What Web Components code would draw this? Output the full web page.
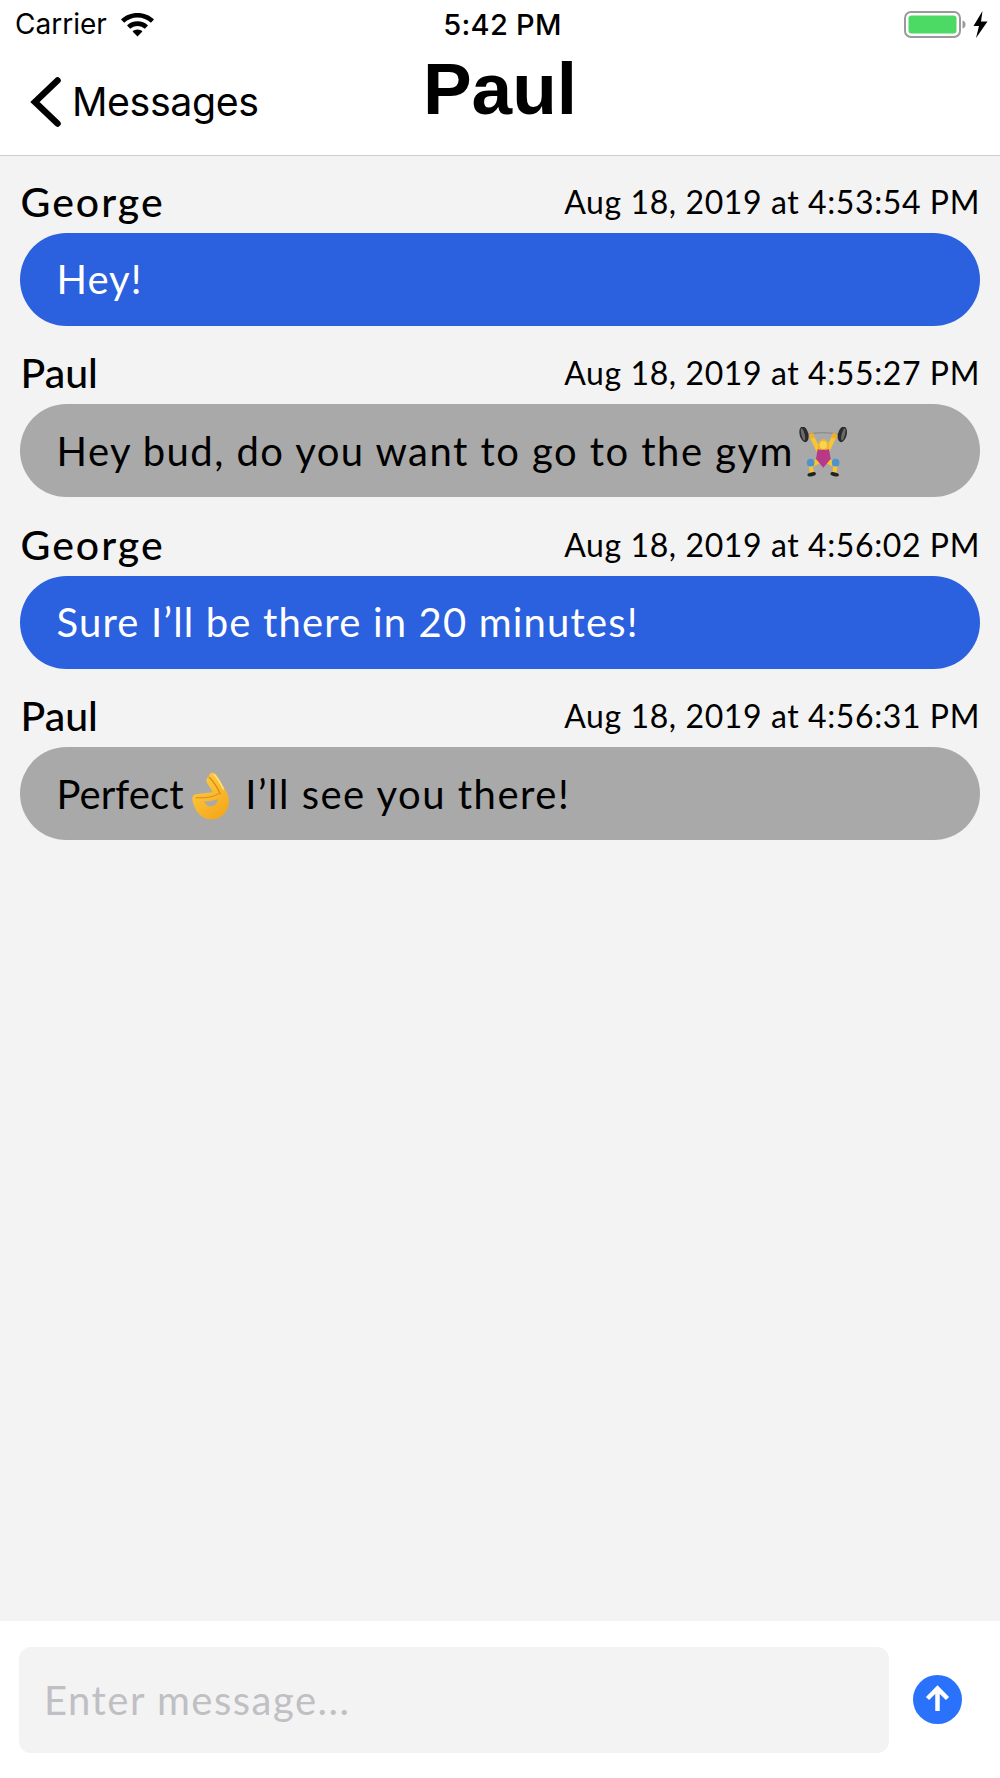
<!DOCTYPE html>
<html lang="en">
<head>
<meta charset="utf-8">
<title>Paul</title>
<style>
  html, body { margin: 0; padding: 0; background: #fff; }
  .george { --name-track: 2px; }
  .paul { --name-track: 0px; }
</style>
</head>
<body>
<chat-screen>
  <status-bar slot="status" carrier="Carrier" time="5:42 PM"></status-bar>
  <nav-bar slot="nav" back="Messages" title="Paul"></nav-bar>
  <chat-message class="george" sender="George" time="Aug 18, 2019 at 4:53:54 PM" kind="mine">Hey!</chat-message>
  <chat-message class="paul" style="--body-track:1.46px" sender="Paul" time="Aug 18, 2019 at 4:55:27 PM" kind="theirs">Hey bud, do you want to go to the gym<chat-emoji name="lifter"></chat-emoji></chat-message>
  <chat-message class="george" style="--body-track:1.17px" sender="George" time="Aug 18, 2019 at 4:56:02 PM" kind="mine">Sure I’ll be there in 20 minutes!</chat-message>
  <chat-message class="paul" style="--body-track:1.5px" sender="Paul" time="Aug 18, 2019 at 4:56:31 PM" kind="theirs"><span style="letter-spacing:.07px">Perfect</span><chat-emoji name="ok"></chat-emoji> I’ll see you there!</chat-message>
  <message-input slot="footer" placeholder="Enter message..."></message-input>
</chat-screen>

<script>
class ChatScreen extends HTMLElement {
  constructor() {
    super()
    const shadow = this.attachShadow({mode: 'open'})
    shadow.innerHTML = `
      <style>
        :host {
          display: flex;
          flex-direction: column;
          width: 1000px;
          height: 1778px;
          background: #fff;
          overflow: hidden;
        }
        .list {
          flex: 1;
          display: flex;
          flex-direction: column;
          gap: 2px;
          padding: 0 20px 0 19.5px;
          background: #f3f3f3;
        }
      </style>
      <slot name="status"></slot>
      <slot name="nav"></slot>
      <div class="list"><slot></slot></div>
      <slot name="footer"></slot>
    `
  }
}

class StatusBar extends HTMLElement {
  constructor() {
    super()
    const shadow = this.attachShadow({mode: 'open'})
    shadow.innerHTML = `
      <style>
        :host {
          display: grid;
          grid-template-columns: 1fr auto 1fr;
          align-items: center;
          height: 48px;
          padding: 0 12px 0 15px;
          font-family: Inter, "Liberation Sans", sans-serif;
          color: #000;
        }
        .left { display: flex; align-items: center; gap: 13px; font-size: 28px; }
        .time { font-size: 29px; font-weight: 500; letter-spacing: .3px; margin-left: 2px; }
        .right { display: flex; align-items: center; justify-content: flex-end; }
        svg { display: block; }
      </style>
      <div class="left">
        <span>${this.getAttribute('carrier')}</span>
        <svg width="35" height="25" viewBox="0 0 35 25">
          <path d="M17.5 1C11 1 5.3 3.4 1 7.4l3.2 3.4c3.5-3.2 8.2-5.2 13.3-5.2s9.8 2 13.3 5.2L34 7.4C29.700 3.400 24 1 17.500 1z"/>
          <path d="M17.500 9.300c-4 0-7.700 1.500-10.500 4.100l3.200 3.400c1.900-1.800 4.500-2.900 7.300-2.900s5.400 1.100 7.300 2.900l3.200-3.400c-2.800-2.600-6.500-4.100-10.500-4.100z"/>
          <path d="M17.500 17.500c-1.900 0-3.600.7-4.900 1.900l4.900 5.100 4.900-5.100c-1.300-1.200-3-1.900-4.900-1.900z"/>
        </svg>
      </div>
      <span class="time">${this.getAttribute('time')}</span>
      <div class="right">
        <svg width="84" height="28" viewBox="0 0 84 28">
          <rect x="1" y="2" width="55" height="25" rx="6" fill="none" stroke="#9a9a9a" stroke-width="2"/>
          <rect x="4.500" y="5.500" width="48" height="18" rx="3" fill="#4cd964"/>
          <path d="M58.500 10.500c2 .5 3 2 3 4s-1 3.500-3 4z" fill="#9a9a9a"/>
          <path d="M79 1 70 16h5.500L72.500 28 84 11.500h-6.500z" transform="translate(-.5 0)"/>
        </svg>
      </div>
    `
  }
}

class NavBar extends HTMLElement {
  constructor() {
    super()
    const shadow = this.attachShadow({mode: 'open'})
    shadow.innerHTML = `
      <style>
        :host {
          display: grid;
          grid-template-columns: 1fr auto 1fr;
          align-items: center;
          height: 107px;
          padding: 0 30px;
          background: #fff;
          border-bottom: 1px solid #cfcfcf;
          color: #000;
        }
        .back {
          display: flex;
          align-items: center;
          gap: 11px;
          font-family: Inter, "Liberation Sans", sans-serif;
          font-size: 39.3px;
          letter-spacing: -.4px;
        }
        svg { display: block; }
        h1 {
          margin: 0 0 27px;
          font-family: "Liberation Sans", Arial, sans-serif;
          font-size: 73px;
          font-weight: 700;
          line-height: 1;
        }
      </style>
      <div class="back">
        <svg width="31" height="50" viewBox="0 0 31 50">
          <path d="M27.500 3.500 5 25l22.500 21.500" fill="none" stroke="#000" stroke-width="6.500" stroke-linecap="round" stroke-linejoin="miter"/>
        </svg>
        <span>${this.getAttribute('back')}</span>
      </div>
      <h1>${this.getAttribute('title')}</h1>
      <div></div>
    `
  }
}

class ChatMessage extends HTMLElement {
  constructor() {
    super()
    const shadow = this.attachShadow({mode: 'open'})
    const mine = this.getAttribute('kind') === 'mine'
    shadow.innerHTML = `
      <style>
        :host {
          display: block;
          font-family: Lato, "Noto Sans", sans-serif;
          color: #000;
        }
        .head {
          display: flex;
          justify-content: space-between;
          align-items: flex-end;
          height: 76.5px;
          box-sizing: border-box;
          padding: 0 0 5px 1px;
        }
        .sender { font-size: 41px; line-height: 52px; letter-spacing: var(--name-track, .6px); font-weight: 500; }
        .time { font-size: 32px; line-height: 44px; letter-spacing: .6px; padding-bottom: 4px; }
        .bubble {
          display: flex;
          align-items: center;
          height: 93px;
          box-sizing: border-box;
          padding: 0 37px;
          border-radius: 46.5px;
          background: ${mine ? '#2b60df' : '#a9a9a9'};
          color: ${mine ? '#fff' : '#000'};
          font-size: 40px;
          letter-spacing: var(--body-track, 1px);
        }
      </style>
      <div class="head">
        <span class="sender">${this.getAttribute('sender')}</span>
        <span class="time">${this.getAttribute('time')}</span>
      </div>
      <div class="bubble"><span><slot></slot></span></div>
    `
  }
}

class ChatEmoji extends HTMLElement {
  constructor() {
    super()
    const shadow = this.attachShadow({mode: 'open'})
    const art = {
      lifter: `
        <svg width="53" height="50" viewBox="-3 8 159 150">
          <path d="M36 30q48-10 96 0" fill="none" stroke="#8d8d8d" stroke-width="4"/>
          <ellipse cx="27" cy="30" rx="13" ry="24" transform="rotate(-14 27 30)" fill="#2b2b2b"/>
          <ellipse cx="142" cy="30" rx="13" ry="24" transform="rotate(14 142 30)" fill="#2b2b2b"/>
          <ellipse cx="24" cy="30" rx="5" ry="19" transform="rotate(-14 24 30)" fill="#6a6a6a"/>
          <ellipse cx="145" cy="30" rx="5" ry="19" transform="rotate(14 145 30)" fill="#6a6a6a"/>
          <path d="M51 38l18 38M117 38l-18 38" stroke="#f7c631" stroke-width="13" stroke-linecap="round"/>
          <circle cx="50" cy="34" r="8" fill="#efb02a"/>
          <circle cx="118" cy="34" r="8" fill="#efb02a"/>
          <path d="M48 122l2 22M121 122l-2 22" stroke="#f7c631" stroke-width="12" stroke-linecap="round"/>
          <ellipse cx="50" cy="150" rx="13" ry="6" fill="#222" transform="rotate(-12 50 150)"/>
          <ellipse cx="119" cy="150" rx="13" ry="6" fill="#222" transform="rotate(12 119 150)"/>
          <path d="M48 112l24-10v16l-14 8zM121 112l-24-10v16l14 8z" fill="#f7c631"/>
          <path d="M68 74h34l5 30-22 26-22-26z" fill="#b83a86"/>
          <circle cx="47" cy="115" r="11.500" fill="#4f94c9"/>
          <circle cx="122" cy="115" r="11.500" fill="#4f94c9"/>
          <path d="M69 58q16-28 32 0q3 12-3 18H72q-6-6-3-18z" fill="#eeb52e"/>
          <ellipse cx="85" cy="62" rx="10.500" ry="12" fill="#f9d452"/>
        </svg>`,
      ok: `
        <svg width="50" height="50" viewBox="6 18 150 150">
          <defs>
            <linearGradient id="g" x1="0" y1="0" x2=".6" y2="1">
              <stop offset="0" stop-color="#ffd24a"/>
              <stop offset="1" stop-color="#f6a91d"/>
            </linearGradient>
          </defs>
          <path d="M90 26c9 0 16 8 21 18l24 42c6 12 7 26 4 40-5 22-24 39-48 40-28 1-49-19-57-47-3-8-4-15-2-21 2-5 7-8 14-8l32-4c5 0 10-1 14-2L76 58c-5-8-2-18 4-20 2-6 5-12 10-12z" fill="url(#g)"/>
          <path d="M82 40c13 13 24 31 33 50" fill="none" stroke="#dd8a10" stroke-width="4" stroke-linecap="round"/>
          <path d="M97 32c10 11 20 27 27 43" fill="none" stroke="#ffe98f" stroke-width="4" stroke-linecap="round"/>
          <path d="M66 112c14 1 30-1 42-7-2 11-10 22-22 22-9 0-16-6-20-15z" fill="#a9a9a9"/>
          <path d="M42 101c24 2 54-2 68-12" fill="none" stroke="#dd8a10" stroke-width="3" stroke-linecap="round"/>
        </svg>`
    }
    shadow.innerHTML = `
      <style>
        :host {
          display: inline-block;
          vertical-align: 4px;
          margin: -15px 0;
          white-space: normal;
        }
        svg { display: block; }
      </style>
      ${art[this.getAttribute('name')]}
    `
  }
}

class MessageInput extends HTMLElement {
  constructor() {
    super()
    const shadow = this.attachShadow({mode: 'open'})
    shadow.innerHTML = `
      <style>
        :host {
          display: flex;
          align-items: center;
          gap: 24px;
          height: 157px;
          box-sizing: border-box;
          padding: 0 38px 0 19px;
          background: #fff;
          font-family: Lato, "Noto Sans", sans-serif;
        }
        .field {
          flex: 1;
          display: flex;
          align-items: center;
          height: 106px;
          box-sizing: border-box;
          padding: 0 25px;
          border-radius: 12px;
          background: #f3f3f3;
          color: #bfbfc4;
          font-size: 40px;
          letter-spacing: 1.5px;
        }
        svg { display: block; flex: none; }
      </style>
      <div class="field">${this.getAttribute('placeholder')}</div>
      <svg width="49" height="49" viewBox="0 0 49 49">
        <circle cx="24.500" cy="24.500" r="24.500" fill="#2a72fb"/>
        <path d="M24.500 36V14M14.500 23.500l10-10 10 10" fill="none" stroke="#fff" stroke-width="4.500"/>
      </svg>
    `
  }
}

window.customElements.define('chat-screen', ChatScreen)
window.customElements.define('status-bar', StatusBar)
window.customElements.define('nav-bar', NavBar)
window.customElements.define('chat-message', ChatMessage)
window.customElements.define('chat-emoji', ChatEmoji)
window.customElements.define('message-input', MessageInput)
</script>
</body>
</html>
